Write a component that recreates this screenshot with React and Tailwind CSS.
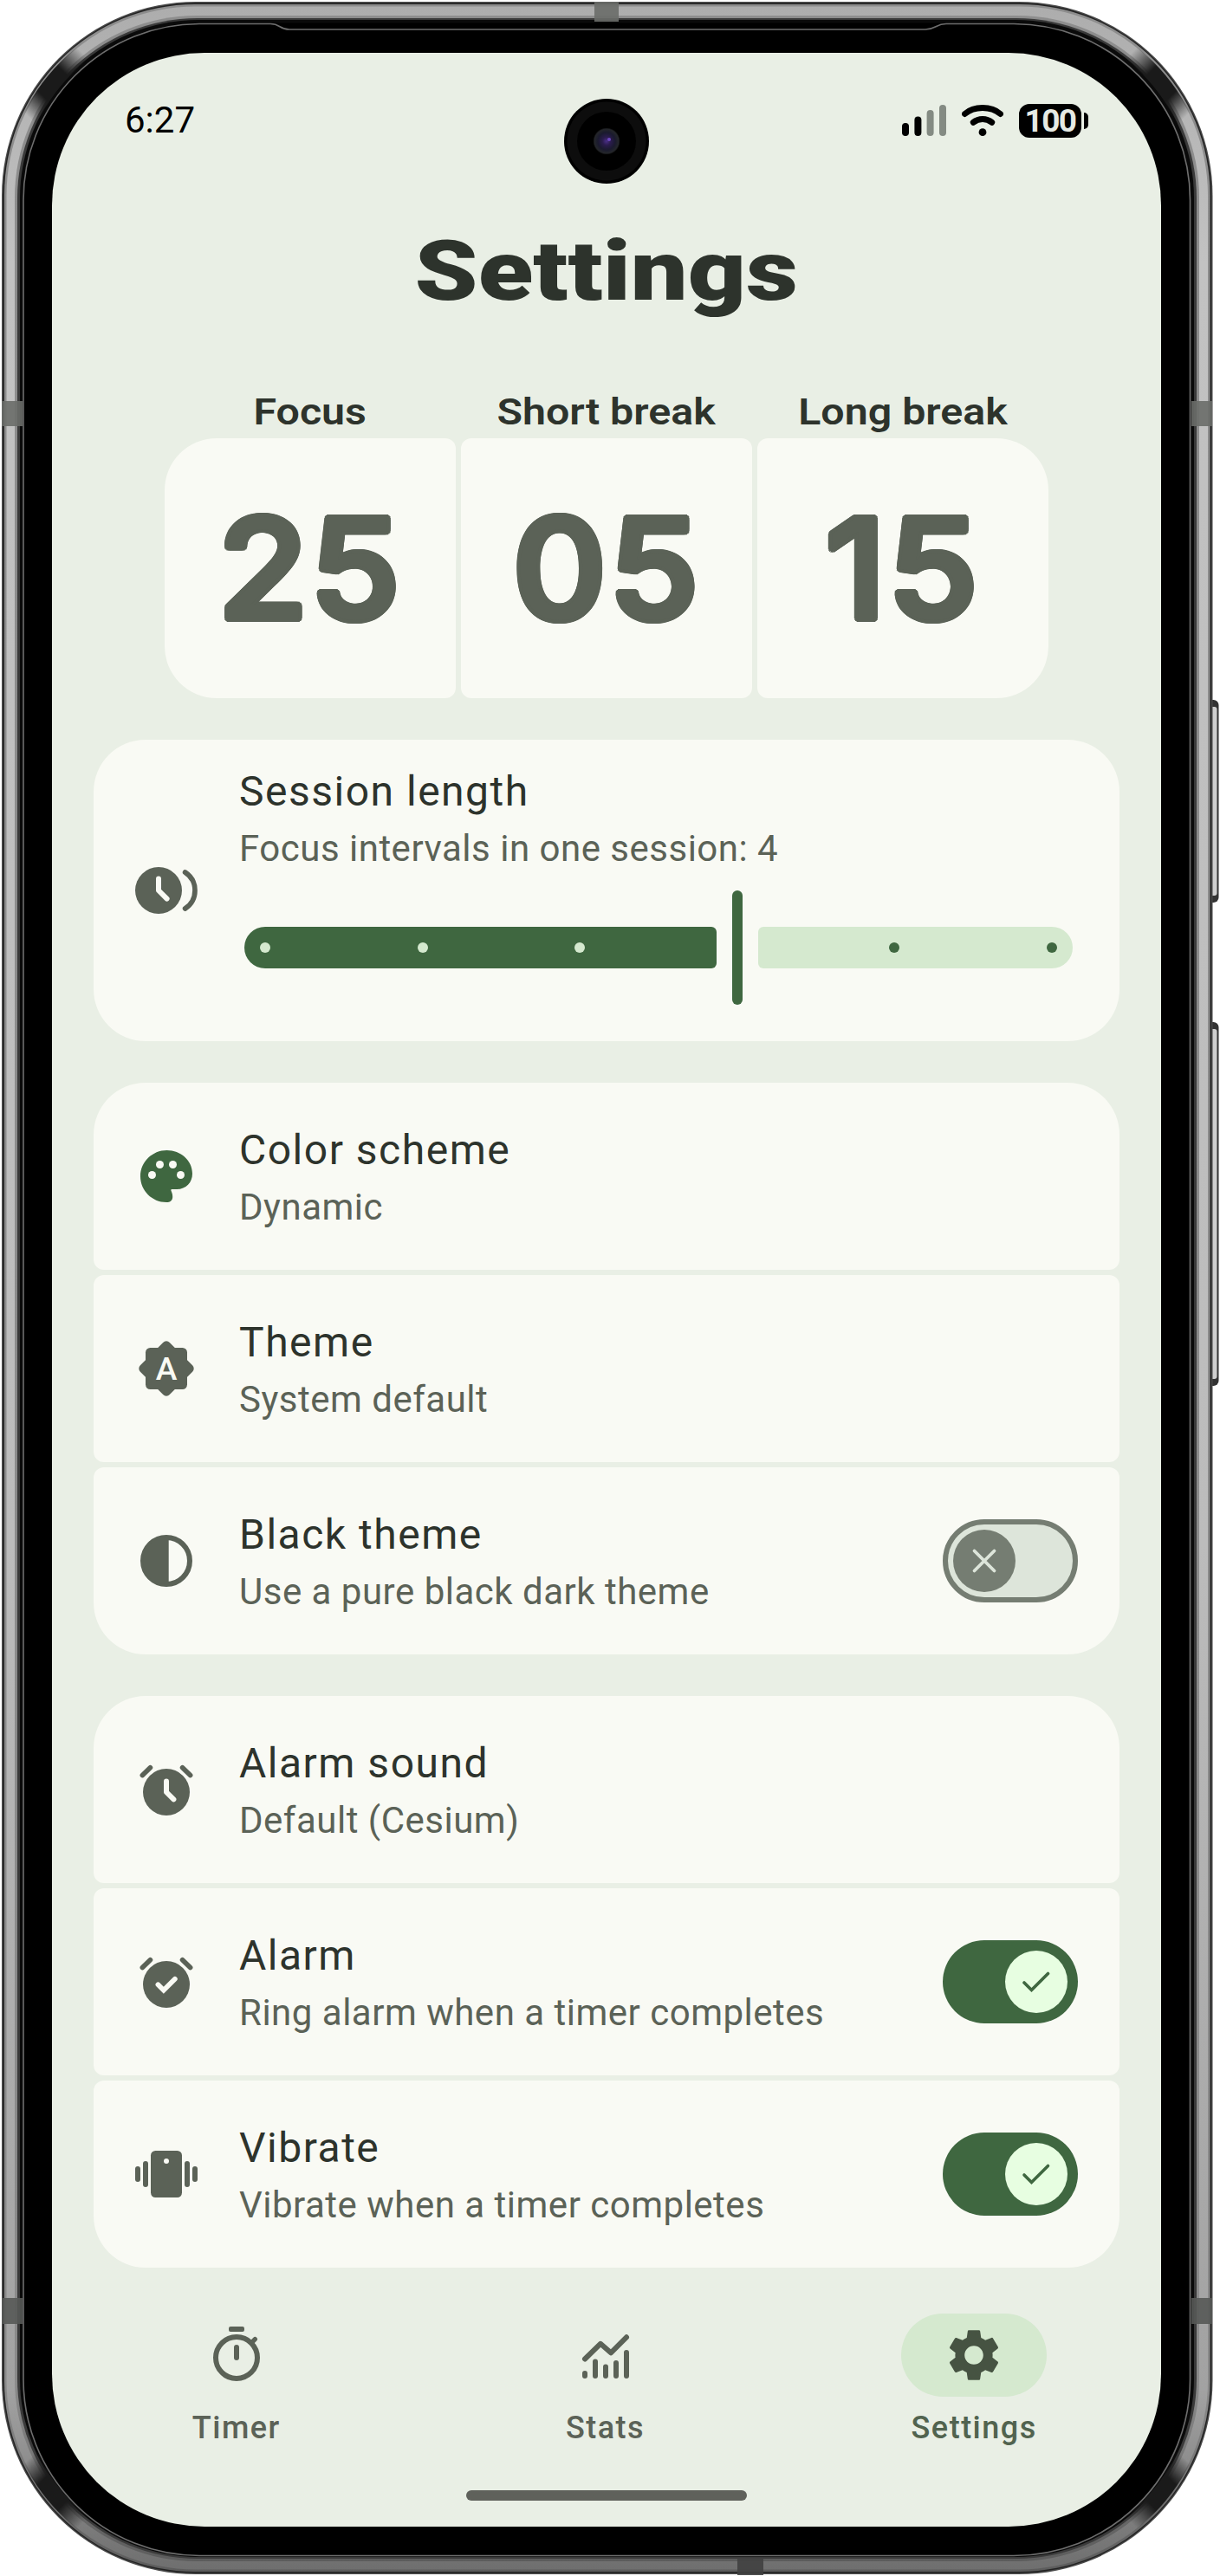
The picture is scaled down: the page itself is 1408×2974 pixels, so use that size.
import React from "react";
import { MdSettings } from "react-icons/md";

const FRAME_ARC = "M 13 235 C 13 110 110 14 235 14";

function CornerShade({ transform }) {
  return (
    <g transform={transform}>
      <path d={FRAME_ARC} fill="none" stroke="url(#cornerShade)" strokeWidth="19" />
    </g>
  );
}

function PhoneFrame() {
  return (
    <svg className="absolute inset-0" width="1408" height="2974" viewBox="0 0 1408 2974" aria-hidden="true">
      <defs>
        <linearGradient id="metal" x1="0" y1="0" x2="0" y2="1">
          <stop offset="0" stopColor="#adadad" />
          <stop offset="0.1" stopColor="#c2c2c2" />
          <stop offset="0.6" stopColor="#bcbcbc" />
          <stop offset="0.93" stopColor="#a2a2a2" />
          <stop offset="1" stopColor="#6f6f6f" />
        </linearGradient>
        <linearGradient id="metalSoft" x1="0" y1="0" x2="0" y2="1">
          <stop offset="0" stopColor="#8d8d8d" />
          <stop offset="0.93" stopColor="#8a8a8a" />
          <stop offset="1" stopColor="#5c5c5c" />
        </linearGradient>
        <linearGradient id="cornerShade" gradientUnits="userSpaceOnUse" x1="30" y1="132" x2="98" y2="64">
          <stop offset="0" stopColor="#1a1a1a" stopOpacity="0" />
          <stop offset="0.3" stopColor="#1a1a1a" />
          <stop offset="0.68" stopColor="#1a1a1a" />
          <stop offset="1" stopColor="#1a1a1a" stopOpacity="0" />
        </linearGradient>
      </defs>
      {[[808, 234], [1180, 420]].map(([y, h]) => (
        <g key={y}>
          <rect x="1390" y={y} width="16.5" height={h} rx="6" fill="#333" />
          <rect x="1390" y={y + 8} width="14.5" height={h - 16} rx="3" fill="#cfcfcf" />
        </g>
      ))}
      <rect x="2" y="2" width="1397.5" height="2970" rx="224" fill="#4a4a4a" />
      <rect x="3.5" y="3.5" width="1394.5" height="2967" rx="222" fill="#222" />
      <rect x="5" y="5" width="1391.5" height="2964" rx="220" fill="url(#metalSoft)" />
      <rect x="7.5" y="7.5" width="1386.5" height="2959" rx="218" fill="url(#metal)" />
      <rect x="17" y="18" width="1367" height="2939" rx="210" fill="url(#metalSoft)" />
      <rect x="20" y="21" width="1361" height="2933" rx="208" fill="#3a3a3a" />
      <rect x="23" y="23" width="1355" height="2929" rx="206" fill="#0a0a0a" />
      <CornerShade />
      <CornerShade transform="translate(1401 0) scale(-1 1)" />
      <CornerShade transform="translate(0 2974) scale(1 -1)" />
      <CornerShade transform="translate(1401 2974) scale(-1 -1)" />
      <rect x="26.5" y="26.5" width="1347.5" height="2924" rx="204" fill="#000" />
      <path
        d="M312 27.500 H230 A203.500 203.500 0 0 0 27 231 V2747 A203.500 203.500 0 0 0 230 2950.500 H1170 A203.500 203.500 0 0 0 1373.500 2747 V231 A203.500 203.500 0 0 0 1170 27.500 H1092 C1080 27.500 1080 34 1068 34 H334 C322 34 324 27.500 312 27.500 Z"
        fill="#000"
        stroke="#6e6e6e"
        strokeWidth="1.6"
      />
      <g fill="#6a6d69" fillOpacity="0.9">
        <rect x="686" y="2" width="28" height="23" />
        <rect x="2" y="463" width="24" height="29" />
        <rect x="1375" y="463" width="24" height="29" />
        <rect x="2" y="2653" width="24" height="30" fill="#575956" />
        <rect x="1375" y="2653" width="24" height="30" fill="#575956" />
        <rect x="851" y="2953" width="30" height="20" fill="#404040" />
      </g>
    </svg>
  );
}

function Camera() {
  return (
    <svg className="absolute left-[591px] top-[53px]" width="98" height="98" viewBox="0 0 98 98" aria-hidden="true">
      <defs>
        <radialGradient id="lens">
          <stop offset="0" stopColor="#4a2f86" />
          <stop offset="0.3" stopColor="#2b1c4e" />
          <stop offset="0.65" stopColor="#1a1a2e" />
          <stop offset="0.9" stopColor="#24262a" />
          <stop offset="1" stopColor="#050505" />
        </radialGradient>
      </defs>
      <circle cx="49" cy="49" r="49" fill="#000" />
      <circle cx="49" cy="49" r="45.500" fill="#0d0d0d" />
      <circle cx="49" cy="49" r="34" fill="#000" />
      <circle cx="49" cy="49" r="15.500" fill="url(#lens)" />
      <circle cx="52" cy="47" r="2" fill="#6e48c0" />
    </svg>
  );
}

function StatusBar() {
  return (
    <div className="flex h-[156px] items-center justify-between pl-[84px] pr-[84px]">
      <span className="text-[42px] leading-none text-black">6:27</span>
      <div className="flex items-center">
        <svg width="52" height="40" viewBox="0 0 52 40">
          <rect x="0" y="23" width="8" height="15" rx="4" />
          <rect x="14.400" y="15.400" width="8" height="22.600" rx="4" />
          <rect x="28.600" y="8" width="8" height="30" rx="4" fill="#848b83" />
          <rect x="43" y="2" width="8" height="36" rx="4" fill="#848b83" />
        </svg>
        <svg className="ml-[17px]" width="48" height="40" viewBox="0 0 48 40" fill="none" stroke="#000" strokeLinecap="round">
          <path d="M3.500 12.500 C14 3.200 34 3.200 44.500 12.500" strokeWidth="7" />
          <path d="M13.300 22.300 C19.500 17.300 28.500 17.300 34.700 22.300" strokeWidth="7" />
          <circle cx="24" cy="33.700" r="4.400" fill="#000" stroke="none" />
        </svg>
        <div className="ml-[18px] flex h-[39px] w-[72px] items-center justify-center rounded-[12px] bg-black text-[37px] font-bold leading-none tracking-[-1.5px] text-[#e6eae4]">
          100
        </div>
        <div className="ml-[3px] h-[19px] w-[5px] rounded-r-[5px] bg-black" />
      </div>
    </div>
  );
}

const DIGIT_ROUNDING =
  "[text-shadow:4px_0_#5b6257,-4px_0_#5b6257,0_4px_#5b6257,0_-4px_#5b6257,2.83px_2.83px_#5b6257,-2.83px_2.83px_#5b6257,2.83px_-2.83px_#5b6257,-2.83px_-2.83px_#5b6257,3.7px_1.53px_#5b6257,-3.7px_1.53px_#5b6257,3.7px_-1.53px_#5b6257,-3.7px_-1.53px_#5b6257,1.53px_3.7px_#5b6257,-1.53px_3.7px_#5b6257,1.53px_-3.7px_#5b6257,-1.53px_-3.7px_#5b6257]";

function TimeBox({ label, value, shape }) {
  return (
    <div className="flex w-[336px] flex-col items-center">
      <div className="scale-x-[1.15] whitespace-nowrap text-[42px] font-semibold leading-[60px] text-[#2d332c]">{label}</div>
      <div className={`flex h-[300px] w-full items-center justify-center bg-[#f9faf4] ${shape}`}>
        <span className={`scale-x-[1.055] font-['Inter'] text-[160px] font-[450] leading-none tracking-[2px] text-[#5b6257] ${DIGIT_ROUNDING}`}>
          {value}
        </span>
      </div>
    </div>
  );
}

const icons = {
  session: (
    <>
      <circle cx="9" cy="12" r="9" />
      <path d="M9 7.500V12l3.200 3.200" fill="none" stroke="#f9faf4" strokeWidth="2" strokeLinecap="round" strokeLinejoin="round" />
      <path d="M19.200 5A8.350 8.350 0 0 1 19.200 19" fill="none" stroke="currentColor" strokeWidth="1.900" strokeLinecap="round" />
    </>
  ),
  palette: (
    <>
      <path d="M12 22C6.500 22 2 17.500 2 12S6.600 2 12.200 2C17.500 2 22 5.900 22 11c0 3.400-2.400 6-6 6h-1.900c-.2 0-.3.200-.3.400 0 .3.600 1 .6 2.500 0 1.400-.9 2.100-2.400 2.100z" />
      <g fill="#f9faf4">
        <circle cx="6.500" cy="11.500" r="1.500" />
        <circle cx="9.500" cy="7.500" r="1.500" />
        <circle cx="14.500" cy="7.500" r="1.500" />
        <circle cx="17.500" cy="11.500" r="1.500" />
      </g>
    </>
  ),
  theme: (
    <>
      <rect x="4" y="4" width="16" height="16" rx="1.800" />
      <rect x="4" y="4" width="16" height="16" rx="1.800" transform="rotate(45 12 12)" />
      <text x="12" y="16.200" textAnchor="middle" fontSize="12.400" fontWeight="500" fill="#f9faf4">A</text>
    </>
  ),
  contrast: (
    <>
      <circle cx="12" cy="12" r="9" fill="none" stroke="currentColor" strokeWidth="2" />
      <path d="M12.900 3A9.050 9.050 0 0 0 3 12a9.050 9.050 0 0 0 9.900 9z" />
    </>
  ),
  alarm: (
    <>
      <circle cx="12" cy="13" r="9" />
      <path d="M2.800 6.500 5.800 3.600M21.200 6.500 18.200 3.600" fill="none" stroke="currentColor" strokeWidth="1.900" strokeLinecap="round" />
      <path d="M12 8.800V13l2.800 2.800" fill="none" stroke="#f9faf4" strokeWidth="2" strokeLinecap="round" strokeLinejoin="round" />
    </>
  ),
  alarmOn: (
    <>
      <circle cx="12" cy="13" r="9" />
      <path d="M2.800 6.500 5.800 3.600M21.200 6.500 18.200 3.600" fill="none" stroke="currentColor" strokeWidth="1.900" strokeLinecap="round" />
      <path d="M8.800 13.100l2.150 2.150 4.350-4.350" fill="none" stroke="#f9faf4" strokeWidth="1.900" strokeLinecap="round" />
    </>
  ),
  vibrate: (
    <>
      <rect x="6" y="3" width="12" height="18" rx="1.800" />
      <rect x="0" y="9" width="2" height="6" rx="1" />
      <rect x="3" y="7" width="2" height="10" rx="1" />
      <rect x="19" y="7" width="2" height="10" rx="1" />
      <rect x="22" y="9" width="2" height="6" rx="1" />
      <circle cx="12" cy="7" r="1" fill="#f9faf4" />
    </>
  ),
  timer: (
    <>
      <rect x="9" y="1" width="6" height="2" rx="0.700" />
      <g fill="none" stroke="currentColor" strokeWidth="2" strokeLinecap="round">
        <circle cx="12" cy="13" r="8" />
        <path d="M12 9v4" />
        <path d="M17.800 7.200 19.100 5.900" strokeWidth="1.800" />
      </g>
    </>
  ),
  stats: (
    <g fill="none" stroke="currentColor" strokeWidth="2" strokeLinecap="round">
      <path d="M4 13.500 10 7.600l4 3.500 6-6" strokeLinejoin="round" />
      <path d="M4 19v1M8 14.500V20M12 16.500V20M16 15V20M20 11V20" />
    </g>
  ),
};

function Icon({ name, className = "" }) {
  return (
    <svg className={`shrink-0 ${className}`} width="72" height="72" viewBox="0 0 24 24" fill="currentColor">
      {icons[name]}
    </svg>
  );
}

function Switch({ on }) {
  return on ? (
    <div className="flex h-[96px] w-[156px] shrink-0 items-center justify-end rounded-full bg-[#3f6740] pr-[12px]">
      <div className="flex size-[72px] items-center justify-center rounded-full bg-[#e7fee1]">
        <svg width="48" height="48" viewBox="0 0 48 48" fill="none" stroke="#3f6740" strokeWidth="3.600" strokeLinecap="round">
          <path d="M10 25l8.500 8.500L37.500 14.500" />
        </svg>
      </div>
    </div>
  ) : (
    <div className="flex h-[96px] w-[156px] shrink-0 items-center rounded-full border-[6px] border-[#757d72] bg-[#dde5da] pl-[6px]">
      <div className="flex size-[72px] items-center justify-center rounded-full bg-[#757d72]">
        <svg width="48" height="48" viewBox="0 0 48 48" fill="none" stroke="#dde5da" strokeWidth="3.800" strokeLinecap="round">
          <path d="M12.500 12.500l23 23M35.500 12.500l-23 23" />
        </svg>
      </div>
    </div>
  );
}

function ItemText({ title, detail }) {
  return (
    <>
      <div className="text-[48px] leading-[72px] tracking-[1.5px] text-[#2d332c]">{title}</div>
      <div className="text-[42px] leading-[60px] tracking-[0.5px] text-[#5b6257]">{detail}</div>
    </>
  );
}

function Row({ icon, title, detail, tint = "text-[#5b6257]", toggle, shape = "rounded-[12px]" }) {
  return (
    <div className={`flex h-[216px] items-center bg-[#f9faf4] px-[48px] ${shape}`}>
      <Icon name={icon} className={tint} />
      <div className="ml-[48px] grow">
        <ItemText title={title} detail={detail} />
      </div>
      {toggle !== undefined && <Switch on={toggle} />}
    </div>
  );
}

function Dot({ className }) {
  return <div className={`size-[12px] rounded-full ${className}`} />;
}

function SessionSlider() {
  return (
    <div className="ml-[6px] mt-[18px] flex h-[132px] w-[956px] items-center">
      <div className="flex h-[48px] w-[545px] items-center gap-[169.600px] rounded-l-[24px] rounded-r-[6px] bg-[#3f6740] pl-[18px]">
        <Dot className="bg-[#d5e9cf]" />
        <Dot className="bg-[#d5e9cf]" />
        <Dot className="bg-[#d5e9cf]" />
      </div>
      <div className="mx-[18px] h-[132px] w-[12px] rounded-full bg-[#3f6740]" />
      <div className="flex h-[48px] grow items-center justify-end gap-[169.600px] rounded-l-[6px] rounded-r-[24px] bg-[#d5e9cf] pr-[18px]">
        <Dot className="bg-[#3f6740]" />
        <Dot className="bg-[#3f6740]" />
      </div>
    </div>
  );
}

function NavItem({ label, active, children }) {
  return (
    <div className="flex flex-1 flex-col items-center">
      <div className={`flex h-[96px] w-[168px] items-center justify-center rounded-full ${active ? "bg-[#d5e9cf] text-[#465342]" : "text-[#5b6257]"}`}>
        {children}
      </div>
      <div className={`mt-[12px] text-[36px] font-medium leading-[48px] tracking-[1.5px] ${active ? "text-[#51634f]" : "text-[#5b6257]"}`}>
        {label}
      </div>
    </div>
  );
}

const TOP = "rounded-t-[60px] rounded-b-[12px]";
const BOTTOM = "rounded-t-[12px] rounded-b-[60px]";

export default function App() {
  return (
    <div className="relative h-[2974px] w-[1408px] overflow-hidden bg-white pl-[60px] pt-[61px] font-['Roboto',sans-serif]">
      <PhoneFrame />
      <main className="relative h-[2856px] w-[1280px] overflow-hidden rounded-[176px] bg-[#e9efe5]">
        <StatusBar />
        <Camera />
        <header className="flex h-[192px] items-center justify-center">
          <h1 className="scale-x-[1.217] text-[96px] font-black leading-none text-[#2d332c]">Settings</h1>
        </header>

        <section className="mt-[37px] flex justify-center gap-[6px]">
          <TimeBox label="Focus" value="25" shape="rounded-l-[60px] rounded-r-[12px]" />
          <TimeBox label="Short break" value="05" shape="rounded-[12px]" />
          <TimeBox label="Long break" value="15" shape="rounded-l-[12px] rounded-r-[60px]" />
        </section>

        <div className="mt-[48px] flex flex-col gap-[48px] px-[48px]">
          <section className="flex h-[348px] items-center rounded-[60px] bg-[#f9faf4] px-[48px]">
            <Icon name="session" className="text-[#5b6257]" />
            <div className="ml-[48px] h-full grow pt-[24px]">
              <ItemText title="Session length" detail="Focus intervals in one session: 4" />
              <SessionSlider />
            </div>
          </section>

          <section className="flex flex-col gap-[6px]">
            <Row icon="palette" tint="text-[#3f6740]" title="Color scheme" detail="Dynamic" shape={TOP} />
            <Row icon="theme" title="Theme" detail="System default" />
            <Row icon="contrast" title="Black theme" detail="Use a pure black dark theme" toggle={false} shape={BOTTOM} />
          </section>

          <section className="flex flex-col gap-[6px]">
            <Row icon="alarm" title="Alarm sound" detail="Default (Cesium)" shape={TOP} />
            <Row icon="alarmOn" title="Alarm" detail="Ring alarm when a timer completes" toggle={true} />
            <Row icon="vibrate" title="Vibrate" detail="Vibrate when a timer completes" toggle={true} shape={BOTTOM} />
          </section>
        </div>

        <nav className="mt-[53px] flex pr-[3px]">
          <NavItem label="Timer"><Icon name="timer" /></NavItem>
          <NavItem label="Stats"><Icon name="stats" /></NavItem>
          <NavItem label="Settings" active><MdSettings size={72} /></NavItem>
        </nav>
        <div className="mx-auto mt-[48px] h-[12px] w-[324px] rounded-full bg-[#5f615b]" />
      </main>
    </div>
  );
}
